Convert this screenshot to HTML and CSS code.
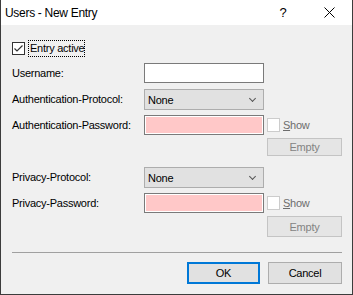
FILE: index.html
```html
<!DOCTYPE html>
<html lang="en">
  <head>
    <meta charset="UTF-8" />
    <title>Users - New Entry</title>
    <link rel="stylesheet" href="styles.css">
  </head>
  <body>
    <div class="window">
      <div class="titlebar">
        <span class="title">Users - New Entry</span>
        <span class="help">?</span>
        <span class="close">
          <svg width="11" height="11" viewBox="0 0 11 11">
            <path d="M0.5 0.5 L10.5 10.5 M10.5 0.5 L0.5 10.5" stroke="#000" stroke-width="1" fill="none" />
          </svg>
        </span>
      </div>

      <div class="content">
        <label class="check-main">
          <span class="box">
            <svg width="11" height="11" viewBox="0 0 11 11">
              <path d="M1.5 5.5 L4 8 L9.5 2.5" stroke="#333" stroke-width="1.2" fill="none" />
            </svg>
          </span>
          <span class="focus">Entry active</span>
        </label>

        <div class="form">
          <div class="label">Username:</div>
          <div class="field"><div class="input"></div></div>
          <div></div>

          <div class="label">Authentication-Protocol:</div>
          <div class="field">
            <div class="select"><span>None</span><span class="arrow"></span></div>
          </div>
          <div></div>

          <div class="label">Authentication-Password:</div>
          <div class="field"><div class="input pwd"></div></div>
          <div class="show"><span class="small-box"></span><span><u>S</u>how</span></div>

          <div></div>
          <div></div>
          <div class="extra"><button class="btn disabled">Empty</button></div>

          <div class="label">Privacy-Protocol:</div>
          <div class="field">
            <div class="select"><span>None</span><span class="arrow"></span></div>
          </div>
          <div></div>

          <div class="label">Privacy-Password:</div>
          <div class="field"><div class="input pwd"></div></div>
          <div class="show"><span class="small-box"></span><span><u>S</u>how</span></div>

          <div></div>
          <div></div>
          <div class="extra"><button class="btn disabled tall">Empty</button></div>
        </div>

        <div class="separator"></div>

        <div class="buttons">
          <button class="btn default">OK</button>
          <button class="btn cancel">Cancel</button>
        </div>
      </div>
    </div>
  </body>
</html>
```

FILE: styles.css
```css
* {
  margin: 0;
  padding: 0;
  box-sizing: border-box;
}

body {
  font-family: "Liberation Sans", Arial, sans-serif;
  font-size: 11px;
  letter-spacing: -0.25px;
  color: #000;
  background: #fff;
}

.window {
  width: 353px;
  height: 295px;
  border: 1px solid #3c3c3c;
  border-top: none;
  background: #f0f0f0;
  display: flex;
  flex-direction: column;
}

.titlebar {
  height: 25px;
  background: #fff;
  display: flex;
  align-items: center;
  padding-left: 4px;
}

.title {
  font-size: 12px;
  letter-spacing: -0.3px;
  flex: 1;
  padding-top: 1px;
}

.help {
  font-size: 13px;
  width: 46px;
  text-align: center;
  margin-right: 0;
}

.close {
  width: 46px;
  height: 25px;
  display: flex;
  align-items: center;
  justify-content: center;
  margin-right: 0;
}

.content {
  flex: 1;
  padding: 0 10px 0 11px;
}

.check-main {
  margin-top: 15px;
  height: 17px;
  display: flex;
  align-items: center;
  gap: 3px;
}

.box {
  width: 13px;
  height: 13px;
  border: 1px solid #333;
  background: #fff;
  display: flex;
  align-items: center;
  justify-content: center;
}

.focus {
  border: 1px dotted #000;
  padding: 1px 0 1px 1px;
  line-height: 13px;
}

.form {
  margin-top: 6px;
  display: grid;
  grid-template-columns: 132px 120px 78px;
  grid-template-rows: 26px 26px 23px 29px 26px 23px 21px;
}

.label {
  height: 20px;
  line-height: 20px;
}

.field {
  padding-right: 0;
}

.input {
  width: 120px;
  height: 20px;
  background: #fff;
  border: 1px solid #7a7a7a;
}

.input.pwd {
  background: #ffc8c8;
  box-shadow: inset 0 0 0 1px #fff;
}

.select {
  width: 120px;
  height: 21px;
  background: #e1e1e1;
  border: 1px solid #adadad;
  display: flex;
  align-items: center;
  justify-content: space-between;
  padding: 0 8px 0 3px;
}

.arrow {
  width: 5px;
  height: 5px;
  border-right: 1px solid #555;
  border-bottom: 1px solid #555;
  transform: rotate(45deg);
  margin-top: -3px;
}

.show {
  padding-left: 3px;
  display: flex;
  align-items: center;
  gap: 3px;
  height: 20px;
  color: #6d6d6d;
}

.small-box {
  width: 13px;
  height: 14px;
  background: #fff;
  border: 1px solid #cccccc;
}

.extra {
  padding-left: 3px;
}

.btn {
  font-family: inherit;
  font-size: 11px;
  letter-spacing: -0.25px;
  background: #e1e1e1;
  border: 1px solid #adadad;
  color: #000;
  height: 22px;
}

.btn.disabled {
  width: 75px;
  height: 18px;
  background: #e5e5e5;
  border-color: #c4c4c4;
  color: #838383;
}

.btn.disabled.tall {
  height: 21px;
}

.separator {
  margin-top: 15px;
  height: 1px;
  background: #a0a0a0;
}

.buttons {
  margin-top: 9px;
  display: flex;
  justify-content: flex-end;
  gap: 8px;
  padding-right: 0;
}

.btn.default {
  width: 73px;
  border: 2px solid #0078d7;
}

.btn.cancel {
  width: 74px;
}
```
